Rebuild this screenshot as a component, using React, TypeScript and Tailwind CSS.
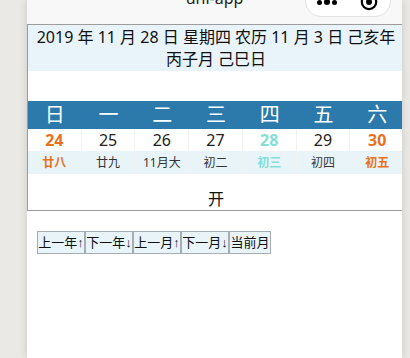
import React from "react";

const days = [
  { d: "24", l: "廿八", c: "text-[#e8711d] font-bold", lc: "text-[#e8711d] font-bold" },
  { d: "25", l: "廿九", c: "text-[#222]", lc: "text-[#333]" },
  { d: "26", l: "11月大", c: "text-[#222]", lc: "text-[#333]" },
  { d: "27", l: "初二", c: "text-[#222]", lc: "text-[#333]" },
  { d: "28", l: "初三", c: "text-[#82e0d8] font-bold", lc: "text-[#82e0d8] font-bold" },
  { d: "29", l: "初四", c: "text-[#222]", lc: "text-[#333]" },
  { d: "30", l: "初五", c: "text-[#e8711d] font-bold", lc: "text-[#e8711d] font-bold" },
];

const weeks = ["日", "一", "二", "三", "四", "五", "六"];
const buttons = [
  { t: "上一年↑", w: "w-[48px]" },
  { t: "下一年↓", w: "w-[48px]" },
  { t: "上一月↑", w: "w-[48px]" },
  { t: "下一月↓", w: "w-[48px]" },
  { t: "当前月", w: "w-[42px]" },
];

export default function App() {
  return (
    <div
      className="w-[410px] h-[358px] bg-[#ebe9e5] flex overflow-hidden"
      style={{ fontFamily: '"Noto Sans", "Noto Sans CJK SC", sans-serif' }}
    >
      <div className="ml-[27px] w-[375px] h-full shrink-0 bg-white shadow-[0_0_8px_rgba(0,0,0,0.15)] overflow-hidden flex flex-col">
        {/* nav bar */}
        <div className="relative h-[24px] shrink-0 bg-[#f8f8f8]">
          <div className="absolute left-0 right-0 top-[-13px] text-center text-[16px] leading-[22px] text-[#222]">
            uni-app
          </div>
          <div className="absolute left-[278px] top-[-15px] w-[86px] h-[32px] rounded-full border border-[#e2e2e2] bg-white flex items-center">
            <div className="w-[43px] flex items-center justify-center gap-[2px] pt-[2px]">
              <span className="w-[5px] h-[5px] rounded-full bg-black" />
              <span className="w-[6px] h-[6px] rounded-full bg-black" />
              <span className="w-[5px] h-[5px] rounded-full bg-black" />
            </div>
            <div className="w-[43px] flex items-center justify-center pt-[2px]">
              <svg width="18" height="18" viewBox="0 0 18 18">
                <circle cx="9" cy="9" r="7.2" fill="none" stroke="#000" strokeWidth="2.2" />
                <circle cx="9" cy="9" r="3" fill="#000" />
              </svg>
            </div>
          </div>
        </div>

        {/* calendar box */}
        <div className="w-[378px] shrink-0 border border-[#9c9c9c] bg-white">
          <div className="bg-[#e8f4fa] text-center text-[16px] leading-[22px] text-[#111] py-[1px]">
            2019 年 11 月 28 日 星期四 农历 11 月 3 日 己亥年 丙子月 己巳日
          </div>
          <div className="h-[30px]" />
          <div className="grid grid-cols-7 h-[28px] bg-[#2b7aab] text-white text-[20px] leading-[28px] text-center">
            {weeks.map((w) => (
              <div key={w}>{w}</div>
            ))}
          </div>
          <div className="grid grid-cols-7 text-center">
            {days.map((x, i) => (
              <div key={x.d} className={`flex flex-col ${i < 6 ? "border-r border-[#f0f2f3]" : ""}`}>
                <div className={`h-[22px] text-[16px] leading-[22px] ${x.c}`}>{x.d}</div>
                <div className={`h-[23px] bg-[#e9f4f8] text-[12px] leading-[23px] ${x.lc}`}>{x.l}</div>
              </div>
            ))}
          </div>
          <div className="h-[36px] pt-[15px] text-center text-[16px] leading-[20px] text-[#111]">开</div>
        </div>

        {/* buttons */}
        <div className="mt-[20px] ml-[10px] flex">
          {buttons.map((b) => (
            <div
              key={b.t}
              className={`${b.w} h-[23px] border border-[#a7adb3] bg-[#e8f4f8] text-[13px] leading-[21px] text-center text-[#111] whitespace-nowrap`}
              style={{ fontFamily: '"Liberation Sans", "Noto Sans CJK SC", sans-serif' }}
            >
              {b.t}
            </div>
          ))}
        </div>
      </div>
    </div>
  );
}
